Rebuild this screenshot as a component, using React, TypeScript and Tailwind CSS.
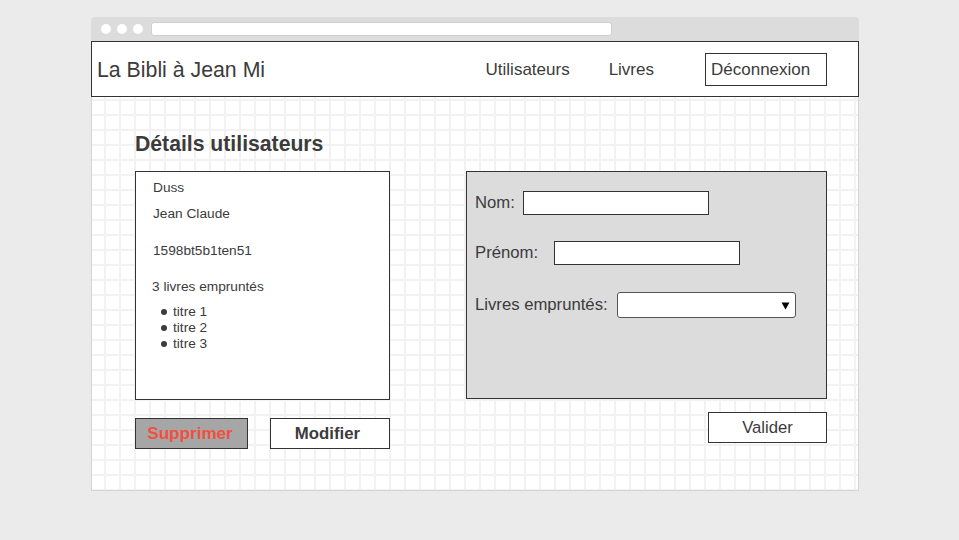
import React from "react";

const font = { fontFamily: '"Liberation Sans", Arial, sans-serif' };

export default function App() {
  return (
    <div className="min-h-[540px] w-[959px] bg-[#ebebeb] pt-[17px] pl-[91px] text-[#3b3b3b]" style={font}>
      <div className="w-[768px]">
        {/* browser top bar */}
        <div className="h-[24px] bg-[#dcdcdc] rounded-t-[4px] flex items-center pl-[10px]">
          <div className="w-[10px] h-[10px] rounded-full bg-white" />
          <div className="w-[10px] h-[10px] rounded-full bg-white ml-[6px]" />
          <div className="w-[10px] h-[10px] rounded-full bg-white ml-[6px]" />
          <div className="h-[14px] w-[461px] ml-[8px] bg-white rounded-[3px] border border-[#cfcfcf]" />
        </div>
        {/* header */}
        <div className="h-[56px] border border-[#333] bg-white flex items-center">
          <div className="ml-[5px] pt-[3px] text-[21.3px]">La Bibli à Jean Mi</div>
          <div className="ml-auto pt-[2px] text-[17px]">Utilisateurs</div>
          <div className="ml-[39px] pt-[2px] text-[17px]">Livres</div>
          <div className="ml-[51px] mr-[31px] w-[122px] h-[33px] border border-[#333] flex items-center pl-[5px] pt-[1px] text-[17px]">
            Déconnexion
          </div>
        </div>
        {/* content */}
        <div className="h-[394px] border-x border-b border-[#d4d4d4] bg-white bg-[image:linear-gradient(to_right,#f2f2f2_2px,transparent_2px),linear-gradient(to_bottom,#f2f2f2_2px,transparent_2px)] bg-[size:15px_15px] bg-[position:12px_2px] pt-[35px] pl-[43px]">
          <h1 className="text-[21.2px] leading-[24px] font-bold">Détails utilisateurs</h1>
          <div className="flex mt-[15px]">
            {/* left column */}
            <div className="w-[255px]">
              <div className="h-[229px] border border-[#333] bg-white text-[13.7px] leading-[16px] pl-[17px]">
                <div className="mt-[8px]">Duss</div>
                <div className="mt-[10px]">Jean Claude</div>
                <div className="mt-[21px]">1598bt5b1ten51</div>
                <div className="mt-[20px] -ml-[1px]">3 livres empruntés</div>
                <ul className="mt-[9px] ml-[8px]">
                  {["titre 1", "titre 2", "titre 3"].map((t) => (
                    <li key={t} className="flex items-center h-[16px]">
                      <span className="w-[6px] h-[6px] rounded-full bg-[#3b3b3b] mr-[6px]" />
                      {t}
                    </li>
                  ))}
                </ul>
              </div>
              <div className="flex mt-[18px]">
                <div className="w-[113px] h-[31px] bg-[#a6a6a6] border border-[#333] flex items-center justify-center pr-[3px] font-bold text-[17.1px] text-[#f2503e]">
                  Supprimer
                </div>
                <div className="ml-[22px] w-[120px] h-[31px] bg-white border border-[#333] flex items-center justify-center pr-[5px] font-bold text-[16.8px]">
                  Modifier
                </div>
              </div>
            </div>
            {/* right column */}
            <div className="ml-[76px] w-[361px] flex flex-col">
              <div className="h-[228px] bg-[#dcdcdc] border border-[#333] pt-[19px] pl-[8px] text-[16.7px]">
                <div className="flex items-center h-[24px]">
                  <span>Nom:</span>
                  <div className="ml-[8px] w-[186px] h-[24px] bg-white border border-[#333]" />
                </div>
                <div className="flex items-center h-[24px] mt-[26px]">
                  <span>Prénom:</span>
                  <div className="ml-[16px] w-[186px] h-[24px] bg-white border border-[#333]" />
                </div>
                <div className="flex items-center h-[26px] mt-[27px]">
                  <span>Livres empruntés:</span>
                  <div className="ml-[9px] w-[179px] h-[26px] bg-white border border-[#555] rounded-[3px] flex items-center justify-end pr-[5px]">
                    <svg width="9" height="9" viewBox="0 0 9 9">
                      <polygon points="0.5,1.5 8.5,1.5 4.5,8.5" fill="#000" />
                    </svg>
                  </div>
                </div>
              </div>
              <div className="self-end mt-[13px] w-[119px] h-[31px] bg-white border border-[#333] flex items-center justify-center pt-[1px] text-[16.7px]">
                Valider
              </div>
            </div>
          </div>
        </div>
      </div>
    </div>
  );
}
